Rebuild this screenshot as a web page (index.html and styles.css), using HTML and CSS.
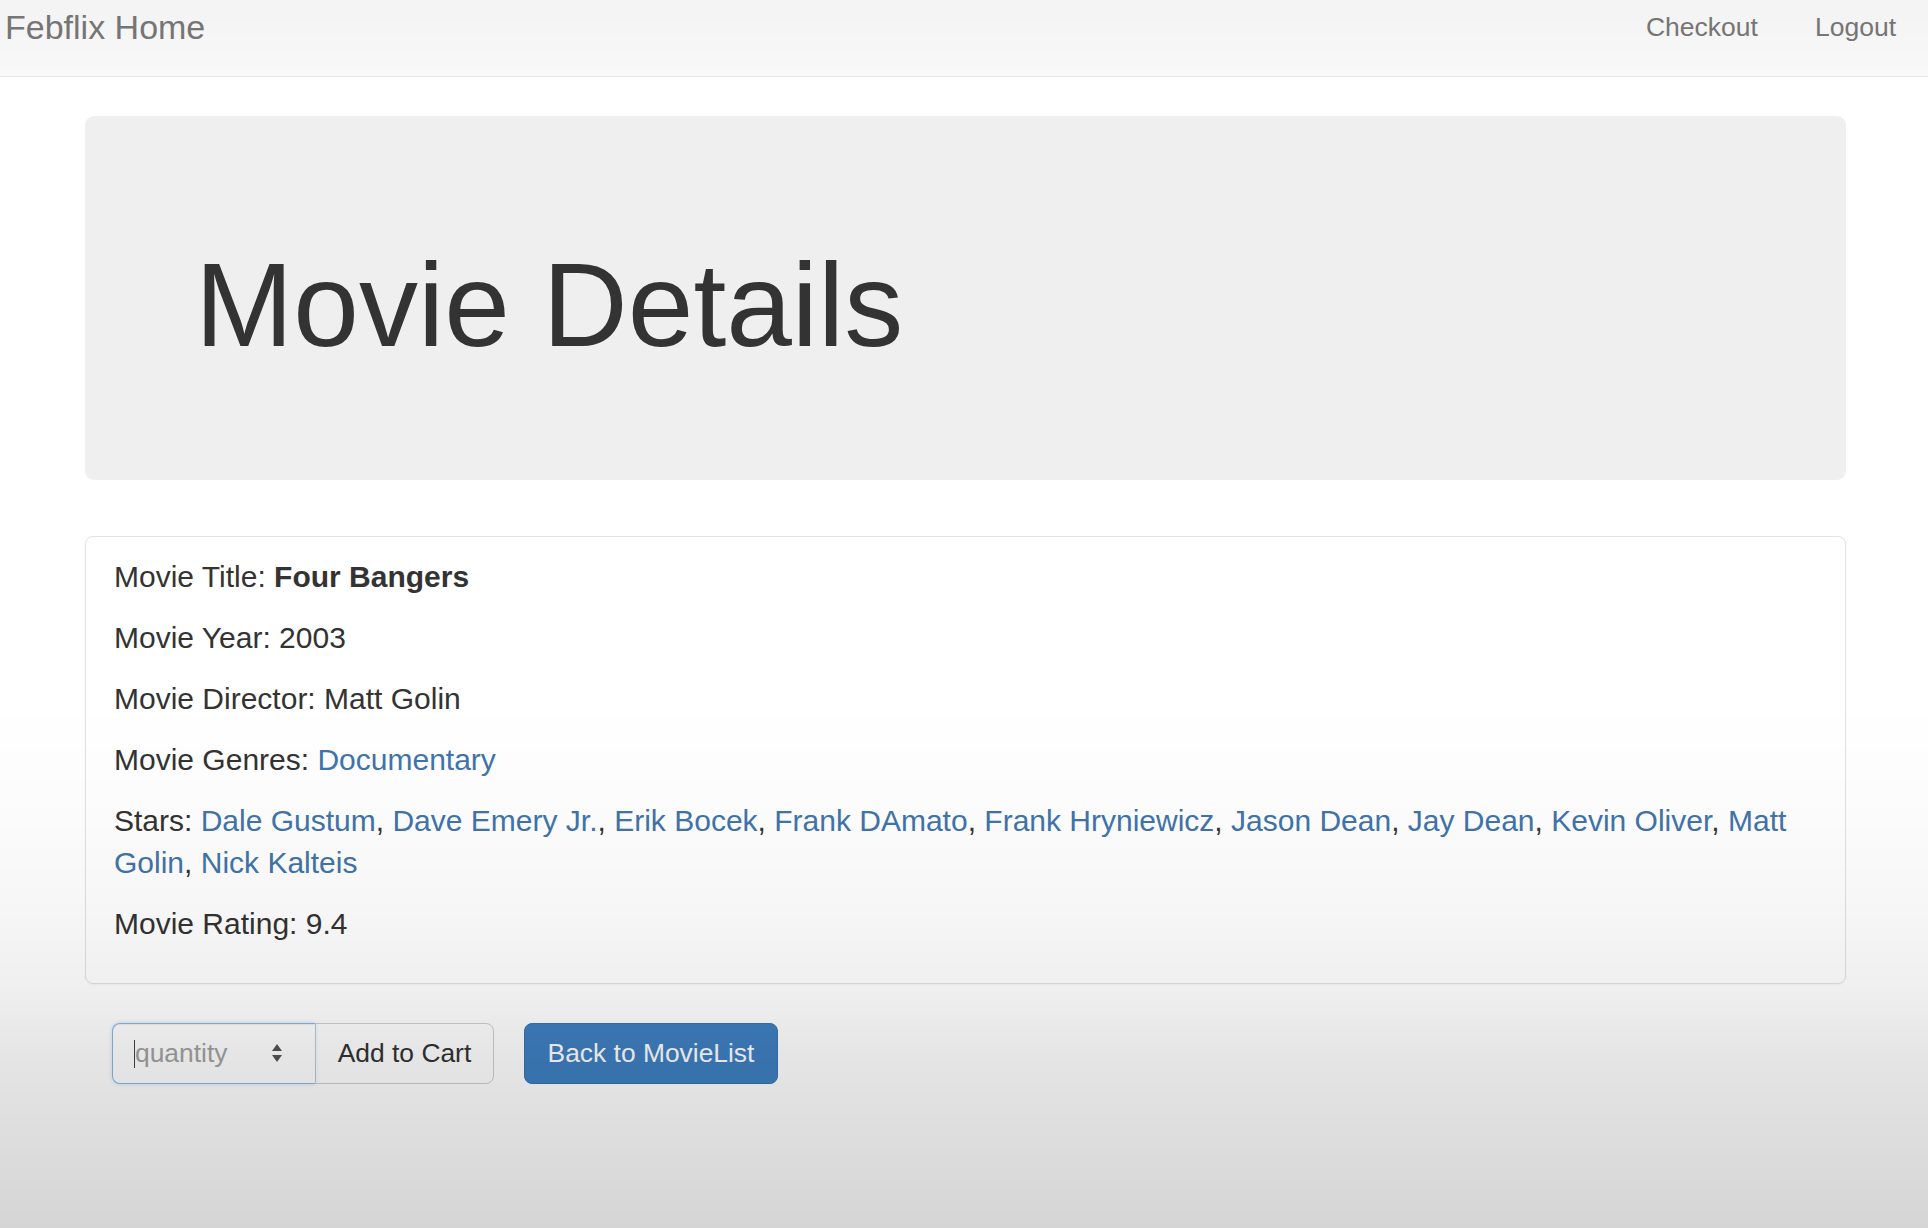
FILE: index.html
```html
<!DOCTYPE html>
<html lang="en">
<head>
<meta charset="utf-8">
<title>Movie Details</title>
<link rel="stylesheet" href="styles.css">
</head>
<body>
<nav class="navbar">
  <a class="brand" href="#">Febflix Home</a>
  <ul class="nav-links">
    <li><a href="#">Checkout</a></li>
    <li><a href="#">Logout</a></li>
  </ul>
</nav>
<main class="container">
  <section class="jumbotron">
    <h1>Movie Details</h1>
  </section>
  <section class="panel">
    <p>Movie Title: <b>Four Bangers</b></p>
    <p>Movie Year: 2003</p>
    <p>Movie Director: Matt Golin</p>
    <p>Movie Genres: <a href="#">Documentary</a></p>
    <p>Stars: <a href="#">Dale Gustum</a>, <a href="#">Dave Emery Jr.</a>, <a href="#">Erik Bocek</a>, <a href="#">Frank DAmato</a>, <a href="#">Frank Hryniewicz</a>, <a href="#">Jason Dean</a>, <a href="#">Jay Dean</a>, <a href="#">Kevin Oliver</a>, <a href="#">Matt Golin</a>, <a href="#">Nick Kalteis</a></p>
    <p>Movie Rating: 9.4</p>
  </section>
  <div class="actions">
    <div class="input-group">
      <div class="qty-wrap">
        <input class="qty" type="text" placeholder="quantity">
        <span class="caret"></span>
        <svg class="spinner" width="14" height="24" viewBox="0 0 14 24"><polygon points="2,10 7,3 12,10" fill="#555"/><polygon points="2,14 7,21 12,14" fill="#555"/></svg>
      </div>
      <button class="btn btn-default" type="button">Add to Cart</button>
    </div>
    <button class="btn btn-primary" type="button">Back to MovieList</button>
  </div>
</main>
<div class="video-shade"></div>
</body>
</html>
```
FILE: styles.css
```css
html, body {
  margin: 0;
  padding: 0;
}
body {
  font-family: "Liberation Sans", Arial, sans-serif;
  color: #333;
  background: #fff;
  min-height: 1228px;
}
a {
  text-decoration: none;
}
.navbar {
  height: 76px;
  background: #f8f8f8;
  border-bottom: 1px solid #e7e7e7;
  display: flex;
  justify-content: space-between;
  align-items: flex-start;
}
.brand {
  font-size: 34px;
  line-height: 38px;
  color: #777;
  padding: 8px 0 0 5px;
}
.nav-links {
  list-style: none;
  margin: 0;
  padding: 12px 32px 0 0;
  display: flex;
  gap: 57px;
}
.nav-links a {
  font-size: 26.5px;
  line-height: 30px;
  color: #777;
}
.container {
  padding: 0 82px 0 85px;
}
.jumbotron {
  margin-top: 39px;
  height: 364px;
  box-sizing: border-box;
  padding: 124px 100px 110px 110px;
  background: #efefef;
  border-radius: 9px;
}
.jumbotron h1 {
  margin: 0;
  font-size: 118px;
  line-height: 130px;
  font-weight: normal;
  color: #333;
}
.panel {
  margin-top: 56px;
  border: 1px solid #e2e2e2;
  border-radius: 8px;
  padding: 19px 28px;
  box-shadow: 0 1px 2px rgba(0,0,0,0.04);
}
.panel p {
  margin: 0 0 19px;
  font-size: 30px;
  line-height: 42px;
}
.panel a {
  color: #4174ab;
}
.panel b {
  font-weight: bold;
}
.actions {
  margin-top: 39px;
  padding-left: 27px;
  display: flex;
  gap: 30px;
}
.input-group {
  display: flex;
}
.qty-wrap {
  position: relative;
  display: flex;
}
.qty {
  width: 203px;
  height: 61px;
  box-sizing: border-box;
  border: 1px solid #8fb6de;
  border-right: none;
  border-radius: 8px 0 0 8px;
  padding: 0 0 0 22px;
  font-family: "Liberation Sans", Arial, sans-serif;
  font-size: 26.4px;
  color: #555;
  background: #fff;
  outline: none;
  box-shadow: inset 0 1px 1px rgba(0,0,0,0.05), 0 0 4px rgba(102,175,233,0.35);
}
.qty::placeholder {
  color: #a2a2a2;
}
.caret {
  position: absolute;
  left: 22px;
  top: 17px;
  width: 1px;
  height: 28px;
  background: #444;
}
.spinner {
  position: absolute;
  left: 158px;
  top: 18px;
}
.btn {
  height: 61px;
  box-sizing: border-box;
  font-family: "Liberation Sans", Arial, sans-serif;
  font-size: 26.4px;
  padding: 0;
  white-space: nowrap;
  text-align: center;
  border-radius: 8px;
  cursor: pointer;
}
.btn-default {
  background: #fff;
  color: #333;
  border: 1px solid #cfcfcf;
  border-radius: 0 8px 8px 0;
  width: 179px;
}
.btn-primary {
  background: #3f80c2;
  color: #fff;
  border: 1px solid #3774b3;
  width: 254px;
}
.video-shade {
  position: fixed;
  inset: 0;
  pointer-events: none;
  background: linear-gradient(to bottom,
    rgba(0,0,0,0.02) 0%,
    rgba(0,0,0,0) 6%,
    rgba(0,0,0,0) 57%,
    rgba(0,0,0,0.01) 65%,
    rgba(0,0,0,0.03) 73%,
    rgba(0,0,0,0.06) 80%,
    rgba(0,0,0,0.10) 86%,
    rgba(0,0,0,0.165) 100%);
}
```
